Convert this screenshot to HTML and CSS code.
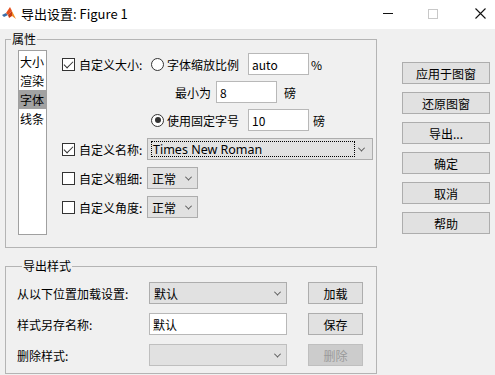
FILE: index.html
```html
<!DOCTYPE html>
<html lang="zh-CN">
<head>
  <meta charset="UTF-8">
  <title>导出设置: Figure 1</title>
  <link rel="stylesheet" href="styles.css">
</head>
<body>
  <header class="titlebar">
    <svg class="app-icon" width="14" height="13" viewBox="0 0 14 13">
      <polygon points="0,8 4,6 6,8 2,10" fill="#3b6ea8"/>
      <polygon points="4,6 8,0 10,4 6,8" fill="#e8501c"/>
      <polygon points="8,0 14,12 10,9 10,4" fill="#f08a24"/>
      <polygon points="6,8 10,4 10,9 7,11" fill="#c73a12"/>
    </svg>
    <span class="title">导出设置: Figure 1</span>
    <div class="winctl">
      <span class="min"></span>
      <span class="max"></span>
      <svg class="close" width="11" height="11" viewBox="0 0 11 11"><path d="M0.5 0.5 L10.5 10.5 M10.5 0.5 L0.5 10.5" stroke="#111" stroke-width="1.1"/></svg>
    </div>
  </header>

  <div class="content">
    <div class="left">
      <fieldset class="group props">
        <legend>属性</legend>
        <div class="props-body">
          <ul class="listbox">
            <li>大小</li>
            <li>渲染</li>
            <li class="sel">字体</li>
            <li>线条</li>
          </ul>
          <div class="opts">
            <div class="row">
              <label class="chk-label"><span class="chk on"></span>自定义大小:</label>
              <span class="radio"></span><span class="rtext">字体缩放比例</span>
              <input class="txt num" value="auto">
              <span class="unit pct">%</span>
            </div>
            <div class="row min-row">
              <span>最小为</span>
              <input class="txt num" value="8">
              <span class="unit">磅</span>
            </div>
            <div class="row fixed-row">
              <span class="radio on"></span><span class="rtext">使用固定字号</span>
              <input class="txt num" value="10">
              <span class="unit">磅</span>
            </div>
            <div class="row gap7">
              <label class="chk-label"><span class="chk on"></span>自定义名称:</label>
              <div class="select wide"><span class="focus">Times New Roman</span><i class="arrow"></i></div>
            </div>
            <div class="row gap7">
              <label class="chk-label"><span class="chk"></span>自定义粗细:</label>
              <div class="select small"><span>正常</span><i class="arrow"></i></div>
            </div>
            <div class="row gap7">
              <label class="chk-label"><span class="chk"></span>自定义角度:</label>
              <div class="select small"><span>正常</span><i class="arrow"></i></div>
            </div>
          </div>
        </div>
      </fieldset>

      <fieldset class="group styles">
        <legend>导出样式</legend>
        <div class="srow">
          <span class="slabel">从以下位置加载设置:</span>
          <div class="select mid"><span>默认</span><i class="arrow"></i></div>
          <button class="btn sbtn">加载</button>
        </div>
        <div class="srow">
          <span class="slabel">样式另存名称:</span>
          <input class="txt mid" value="默认">
          <button class="btn sbtn">保存</button>
        </div>
        <div class="srow">
          <span class="slabel">删除样式:</span>
          <div class="select mid disabled"><span></span><i class="arrow"></i></div>
          <button class="btn sbtn" disabled>删除</button>
        </div>
      </fieldset>
    </div>

    <div class="right">
      <button class="btn">应用于图窗</button>
      <button class="btn">还原图窗</button>
      <button class="btn">导出...</button>
      <button class="btn">确定</button>
      <button class="btn">取消</button>
      <button class="btn">帮助</button>
    </div>
  </div>
</body>
</html>
```

FILE: styles.css
```css
:root {
  --bg: #f0f0f0;
  --frame: #b4b4b4;
  --ctl-bg: #e1e1e1;
  --ctl-border: #adadad;
  --input-border: #b8b8b8;
  --text: #000;
}
* { box-sizing: border-box; }
body {
  margin: 0;
  width: 495px;
  height: 375px;
  overflow: hidden;
  background: var(--bg);
  color: var(--text);
  font-family: "Noto Sans CJK SC", "Noto Sans", sans-serif;
  font-size: 12px;
}

/* Title bar */
.titlebar {
  height: 29px;
  background: #fff;
  display: flex;
  align-items: center;
  padding: 0 0 2px 2px;
}
.app-icon { margin-right: 5px; margin-top: -1px; }
.title { font-size: 13px; }
.winctl {
  margin-left: auto;
  display: flex;
  align-items: center;
  height: 100%;
}
.min { width: 10px; height: 1px; background: #111; margin-right: 35px; }
.max { width: 10px; height: 10px; border: 1px solid #c8c8c8; margin-right: 37px; }
.close { margin-right: 9px; }

/* Layout */
.content { display: flex; padding: 0 5px; }
.left { width: 372px; }
.right {
  width: 88px;
  margin-left: 25px;
  padding-top: 33px;
  display: flex;
  flex-direction: column;
  gap: 8px;
}

/* Group boxes */
.group {
  margin: 2px 0 0;
  padding: 0;
  border: 1px solid var(--frame);
  min-width: 0;
}
.group legend {
  margin-left: 5px;
  padding: 0 1px;
  line-height: 16px;
}
.styles { margin-top: 10px; padding: 0 0 7px 11px; }

/* Properties group */
.props-body { display: flex; padding-bottom: 12px; }
.listbox {
  list-style: none;
  margin: 3px 0 0 12px;
  padding: 1px 0 0;
  width: 29px;
  height: 185px;
  background: #fff;
  border: 1px solid #a0a0a0;
  overflow: hidden;
}
.listbox li {
  height: 19px;
  line-height: 19px;
  padding-left: 1px;
  white-space: nowrap;
}
.listbox li.sel { background: #a2a2a2; }

.opts { margin-left: 15px; padding-top: 6px; display: flex; flex-direction: column; gap: 6px; }
.row { display: flex; align-items: center; height: 22px; }
.row.gap7 { margin-top: 1px; }
.chk-label { display: flex; align-items: center; width: 85px; }
.chk {
  width: 13px; height: 13px;
  border: 1px solid #333;
  background: #fff;
  margin-right: 4px;
  position: relative;
}
.chk.on::after {
  content: "";
  position: absolute;
  left: 3px; top: 0px;
  width: 4px; height: 8px;
  border: solid #333;
  border-width: 0 1px 1px 0;
  transform: rotate(45deg);
}
.radio {
  width: 13px; height: 13px;
  border: 1px solid #333;
  border-radius: 50%;
  background: #fff;
  margin: 0 3px 0 4px;
  position: relative;
}
.radio.on::after {
  content: "";
  position: absolute;
  left: 2.5px; top: 2.5px;
  width: 6px; height: 6px;
  border-radius: 50%;
  background: #333;
}
.rtext { width: 81px; }
.txt {
  height: 22px;
  border: 1px solid var(--input-border);
  background: #fff;
  font: inherit;
  padding: 0 3px;
  color: var(--text);
}
.num { width: 61px; }
.unit { margin-left: 7px; }
.unit.pct { margin-left: 2px; }
.min-row { padding-left: 113px; }
.min-row .txt { margin-left: 5px; }
.fixed-row { padding-left: 85px; }
.fixed-row .unit { margin-left: 4px; }

.select {
  height: 22px;
  display: flex;
  align-items: center;
  background: var(--ctl-bg);
  border: 1px solid var(--ctl-border);
  padding: 0 0 0 4px;
  position: relative;
}
.select .arrow {
  margin-left: auto;
  margin-right: 6px;
  width: 5px; height: 5px;
  border: solid #555;
  border-width: 0 1px 1px 0;
  transform: rotate(45deg) translate(-1px, -1px);
}
.select.wide { width: 226px; padding-left: 3px; }
.select.wide .focus {
  font-family: "Noto Sans", sans-serif;
  font-size: 12.5px;
  width: 204px;
  height: 16px;
  line-height: 15px;
  border: 1px dotted #000;
  padding-left: 1px;
}
.select.wide .arrow { margin-right: 8px; }
.select.small { width: 51px; }
.select.mid { width: 138px; }
.select.disabled { border-color: #bfbfbf; }

/* Export style group */
.srow { display: flex; align-items: center; height: 22px; margin-top: 8px; }
.srow + .srow { margin-top: 9px; }
.slabel { width: 132px; }
.txt.mid { width: 138px; }
.btn {
  height: 22px;
  background: var(--ctl-bg);
  border: 1px solid var(--ctl-border);
  font: inherit;
  color: var(--text);
  padding: 0;
}
.sbtn { width: 55px; margin-left: 21px; }
.btn:disabled { background: #cccccc; border-color: #bfbfbf; color: #9a9a9a; }
```
